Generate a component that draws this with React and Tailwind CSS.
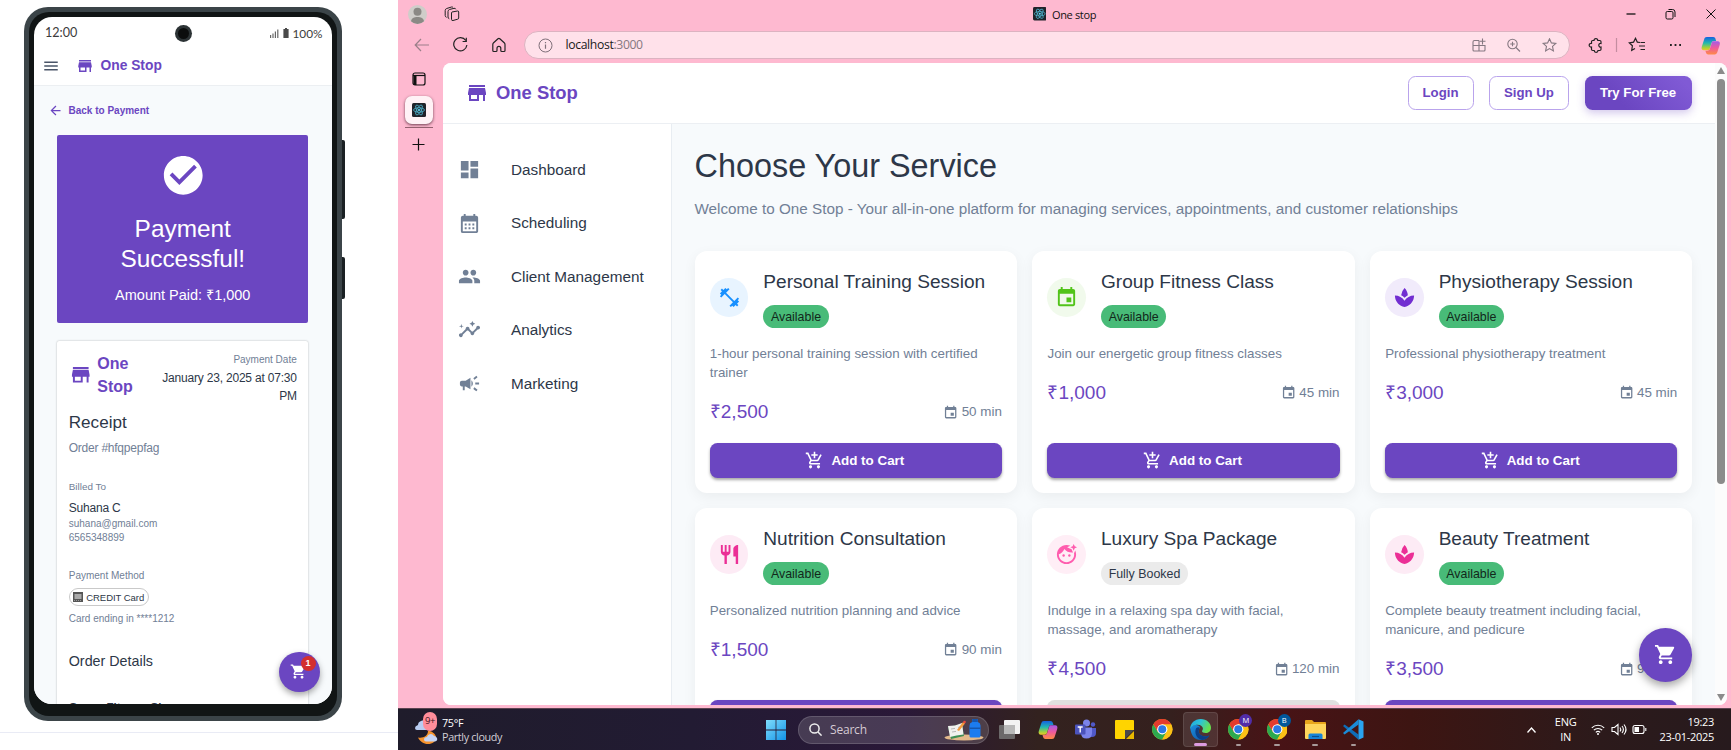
import React from "react";
import {
  MdStore, MdDashboard, MdCalendarMonth, MdPeople, MdInsights, MdCampaign, MdFitnessCenter,
  MdEvent, MdSpa, MdRestaurant, MdFaceRetouchingNatural, MdAddShoppingCart, MdShoppingCart,
  MdCheckCircle, MdMenu, MdArrowBack,
} from "react-icons/md";

/* ---------- phone ---------- */

function PhoneStatus() {
  return (
    <div className="relative flex h-[32px] shrink-0 items-center justify-between pt-px pr-[9px] pl-[11px] text-[#3c3c3c]">
      <span className="font-['Lato',sans-serif] text-[12.6px] leading-none">12:00</span>
      <div className="absolute top-[8px] left-[140.5px] flex size-[17px] items-center justify-center rounded-full bg-[#2c3335]">
        <div className="size-[11px] rounded-full bg-[#0b0d0d]" />
      </div>
      <div className="flex items-center">
        <svg className="h-[9px] w-[9px]" viewBox="0 0 9 9" fill="#666">
          <path d="M0 6h1.2v3H0zM2.4 4.4h1.2V9H2.4zM4.8 2.6H6V9H4.800zM7.200 .6h1.2V9H7.200z" />
        </svg>
        <svg className="ml-[4px] h-[10px] w-[6px]" viewBox="0 0 6 10" fill="#4a4a4a">
          <path d="M2 0h2v1h1.600v9H.4V1H2z" />
        </svg>
        <span className="ml-[4px] font-['Lato',sans-serif] text-[11.8px] leading-none">100%</span>
      </div>
    </div>
  );
}

function Receipt() {
  return (
    <div className="mt-[17.500px] h-[400px] w-[251px] shrink-0 rounded-[2px] bg-white px-[11.500px] pt-[11px] text-[#2d3748] shadow-[0_0_2px_rgba(0,0,0,0.3)]">
      <div className="flex h-[54px] justify-between">
        <div className="flex h-[47px] items-center text-[#6b46c1]">
          <MdStore className="size-[23.500px]" />
          <span className="ml-[5px] w-[40px] text-[16px] leading-[23.500px] font-bold">One Stop</span>
        </div>
        <div className="w-[142px] text-right">
          <div className="text-[10px] leading-4 text-[#718096]">Payment Date</div>
          <div className="mt-px text-[12px] leading-[18px] tracking-[-0.2px]">January 23, 2025 at 07:30 PM</div>
        </div>
      </div>
      <div className="mt-[9px] text-[17.100px] leading-4">Receipt</div>
      <div className="mt-[9px] text-[12px] leading-4 tracking-[-0.23px] text-[#718096]">Order #hfqpepfag</div>
      <div className="mt-[23px] text-[9.900px] leading-4 text-[#718096]">Billed To</div>
      <div className="mt-[5px] text-[12px] leading-4 tracking-[-0.2px]">Suhana C</div>
      <div className="mt-px text-[10px] leading-[14px] text-[#718096]">suhana@gmail.com</div>
      <div className="text-[10px] leading-[14px] text-[#718096]">6565348899</div>
      <div className="mt-[23px] text-[10px] leading-4 text-[#718096]">Payment Method</div>
      <div className="mt-[4.500px] flex h-[17.500px] w-[80.500px] items-center rounded-full border border-[#c9c9c9] pl-[3px]">
        <svg className="size-[10px]" viewBox="0 0 10 10">
          <rect width="10" height="10" fill="#555" />
          <rect x="1.500" y="2" width="7" height="5" fill="#a9a9a9" />
          <path d="M1 8.500h8" stroke="#999" strokeWidth="1" strokeDasharray="1 1" />
        </svg>
        <span className="ml-[3.500px] pt-px text-[9.500px] leading-none tracking-[-0.05px] whitespace-nowrap">CREDIT Card</span>
      </div>
      <div className="mt-[5px] text-[10px] leading-4 text-[#718096]">Card ending in ****1212</div>
      <div className="mt-[26px] text-[14.300px] leading-4">Order Details</div>
      <div className="mt-[30px] text-[11.500px] leading-4 font-bold">Group Fitness Class</div>
    </div>
  );
}

function Phone() {
  return (
    <div className="relative mt-[7px] ml-[24px] h-[714px] w-[317.500px]">
      <div className="absolute top-[133px] -right-[3px] h-[79px] w-[5px] rounded-[2px] bg-[#1a2023]" />
      <div className="absolute top-[250px] -right-[3px] h-[42px] w-[5px] rounded-[2px] bg-[#1a2023]" />
      <div className="relative h-full w-full rounded-[24px] bg-[#3b4448] p-[5px]">
        <div className="h-full w-full rounded-[20px] bg-[#111515] px-[5px] pt-[5px] pb-[12px]">
          <div className="relative flex h-full w-full flex-col overflow-hidden rounded-[18px] bg-white">
            <PhoneStatus />
            <div className="flex h-[37px] shrink-0 items-center border-b border-[#eceff2] pb-[3px] pl-[8px]">
              <MdMenu className="h-[18px] w-[18px] text-[#4a5568]" />
              <div className="ml-[16px] flex items-center text-[#6b46c1]">
                <MdStore className="size-[18px]" />
                <span className="ml-[6.500px] pt-px text-[13.800px] leading-none font-bold">One Stop</span>
              </div>
            </div>
            <div className="flex grow flex-col items-center bg-[#f7fafc]">
              <div className="flex w-full items-center pt-[16.500px] pl-[14px] text-[#6b46c1]">
                <MdArrowBack className="size-[15px]" />
                <span className="ml-[5.500px] text-[10px] leading-4 font-bold">Back to Payment</span>
              </div>
              <div className="mt-[16.500px] flex h-[188px] w-[251px] shrink-0 flex-col items-center rounded-[2px] bg-[#6b46c1] pt-[17px] text-white">
                <MdCheckCircle className="size-[46.500px]" />
                <div className="mt-[15px] w-[160px] text-center text-[24.400px] leading-[30px]">Payment Successful!</div>
                <div className="mt-[11px] text-[14.500px] leading-[20px]">Amount Paid: ₹1,000</div>
              </div>
              <Receipt />
            </div>
            <div className="absolute right-[12px] bottom-[12px] flex size-[40.500px] items-center justify-center rounded-full bg-[#6b46c1] text-white shadow-[0_3px_6px_rgba(0,0,0,0.35)]">
              <MdShoppingCart className="mr-px size-[17px]" />
              <span className="absolute top-[4.500px] right-[4px] flex size-[15px] items-center justify-center rounded-full bg-[#d32f2f] text-[9px] font-bold">1</span>
            </div>
          </div>
        </div>
      </div>
    </div>
  );
}

/* ---------- brand marks ---------- */

function ReactMark({ className }) {
  return (
    <svg className={className} viewBox="0 0 14 14">
      <rect width="14" height="14" rx="1.500" fill="#20232a" />
      <g fill="none" stroke="#4fb6d0" strokeWidth=".8">
        <ellipse cx="7" cy="7" rx="5.500" ry="2.200" />
        <ellipse cx="7" cy="7" rx="5.500" ry="2.200" transform="rotate(60 7 7)" />
        <ellipse cx="7" cy="7" rx="5.500" ry="2.200" transform="rotate(120 7 7)" />
      </g>
      <circle cx="7" cy="7" r="1.100" fill="#61dafb" />
    </svg>
  );
}

function Copilot({ className, id }) {
  return (
    <svg className={className} viewBox="0 0 20 20">
      <defs>
        <linearGradient id={id + "a"} x1="0" y1="0" x2="0" y2="1">
          <stop offset="0" stopColor="#1560e0" />
          <stop offset=".45" stopColor="#22b8b0" />
          <stop offset=".8" stopColor="#a5cf3a" />
          <stop offset="1" stopColor="#f0c52a" />
        </linearGradient>
        <linearGradient id={id + "b"} x1="0" y1="0" x2="0" y2="1">
          <stop offset="0" stopColor="#a35be8" />
          <stop offset=".5" stopColor="#ee5a9c" />
          <stop offset="1" stopColor="#ff8b45" />
        </linearGradient>
      </defs>
      <path fill={"url(#" + id + "a)"} d="M6 1h6.500c1.300 0 2 .7 2.400 2l.6 2h-2c-1.600 0-2.300.9-2.700 2.200L9 13c-.4 1.300-1 1.700-2.200 1.700H3C.8 14.700.2 13 .8 11L3.200 3.500C3.700 1.800 4.500 1 6 1z" />
      <path fill={"url(#" + id + "b)"} d="M14 19H7.500c-1.300 0-2-.7-2.400-2l-.6-2h2c1.600 0 2.300-.9 2.700-2.200L11 7c.4-1.300 1-1.700 2.200-1.700H17c2.200 0 2.800 1.700 2.200 3.700l-2.400 7.500C16.300 18.200 15.500 19 14 19z" />
    </svg>
  );
}

function Chrome({ className }) {
  return (
    <svg className={className} viewBox="0 0 20 20">
      <circle cx="10" cy="10" r="10" fill="#fbc116" />
      <path fill="#2da94f" d="M10 20A10 10 0 0 1 1.340 5L5.700 12.500 10 15l4.300-2.500z" />
      <path fill="#fbc116" d="M10 20 14.300 12.500 14 7 10 5h8.660A10 10 0 0 1 10 20z" />
      <path fill="#e33b2e" d="M1.340 5A10 10 0 0 1 18.660 5H10L5.700 12.500z" />
      <circle cx="10" cy="10" r="5" fill="#fff" />
      <circle cx="10" cy="10" r="3.900" fill="#2a78e4" />
    </svg>
  );
}

function Edge({ className }) {
  return (
    <svg className={className} viewBox="0 0 20 20">
      <defs>
        <linearGradient id="edgeTop" x1="0" y1="0" x2="1" y2=".4">
          <stop offset="0" stopColor="#1fa6e0" />
          <stop offset=".5" stopColor="#2cc3d8" />
          <stop offset="1" stopColor="#67e04e" />
        </linearGradient>
        <linearGradient id="edgeLow" x1="0" y1="0" x2="1" y2="1">
          <stop offset="0" stopColor="#1b8fe0" />
          <stop offset="1" stopColor="#0f4fa0" />
        </linearGradient>
      </defs>
      <path fill="url(#edgeLow)" d="M.2 8.500C1 14 3 20 10.500 20c4 0 6.500-2 7.900-4.300-4.400 2.300-10.200.3-10.100-4.200C8.300 9 10 8.500 9.500 7.500 7 4.500 1.500 5.500.2 8.500z" />
      <path fill="#0c3f86" d="M6 8.500c-2.300 4 .2 10.500 5.500 11.400 3.300-.1 5.600-2 6.900-4.200-4.400 2.300-10.200.3-10.100-4.200 0-1.600.8-2.500 1.200-3.200-1-.8-2.500-.7-3.500.2z" />
      <path fill="url(#edgeTop)" d="M0 9.500C.3 4 4.500 0 10.200 0 16 0 20 4 20 8.300c0 3.200-2.400 5-5 5-2.300 0-3.600-.8-3.600-1.600 0-.7.900-.9.900-2.600 0-2-2-3.700-5-3.700C3.500 5.400.8 7.500 0 9.500z" />
    </svg>
  );
}

/* ---------- browser ---------- */

function TitleBar() {
  return (
    <div className="flex h-[28px] shrink-0 items-center text-[#111]">
      <svg className="ml-[10px] size-[19px]" viewBox="0 0 19 19">
        <circle cx="9.500" cy="9.500" r="9.500" fill="#cfcdc9" />
        <circle cx="9.500" cy="6.800" r="4" fill="#8b8985" />
        <path d="M3 16.300c.5-3.300 3-4.300 6.500-4.300s6 1 6.500 4.300A9.500 9.500 0 0 1 9.500 19 9.500 9.500 0 0 1 3 16.300z" fill="#8b8985" />
      </svg>
      <svg className="ml-[17px] size-[16px]" viewBox="0 0 16 16" fill="none" stroke="#222" strokeWidth="1">
        <path d="m8 6 5.500-1q1.200-.2 1.200 1v6q0 1-1 1.200L9 14.500q-1.500.3-1.500-1.200V7q0-.8.5-1z" />
        <path d="M5.300 12.800Q4 12.500 4 11V5.500q0-1.500 1.500-2L10 2.300q1.500-.3 1.800 1M2.600 11.300Q1.200 11 1.200 9.500V4.500q0-1.500 1.500-2L7.500 1Q8.500.8 9 1.500" />
      </svg>
      <ReactMark className="ml-[572.500px] size-[13.500px]" />
      <span className="ml-[6px] w-[46px] font-['Open_Sans',sans-serif] text-[11px] leading-none tracking-[-0.35px] whitespace-nowrap">One stop</span>
      <svg className="ml-[528px] h-[12px] w-[90px]" viewBox="0 0 90 12" fill="none" stroke="#111" strokeWidth="1">
        <path d="M.5 6h9" strokeWidth="1.300" />
        <rect x="40" y="3.500" width="7" height="7.500" rx="1.300" />
        <path d="M42.500 1.500h4q2.500 0 2.500 2.500v5" />
        <path d="m80.500 1.500 9 9m0-9-9 9" />
      </svg>
    </div>
  );
}

function ToolBar() {
  return (
    <div className="flex h-[34.500px] shrink-0 items-center">
      <svg className="ml-[16px] h-[16px] w-[92px]" viewBox="0 0 92 16" fill="none" stroke="#222" strokeWidth="1.200">
        <path d="M15 8H1.500M7 2 1.200 8 7 14" stroke="#9b7f89" />
        <path d="M51.500 3.500A6.600 6.600 0 1 0 52.600 8M52 .8v3.700h-3.700" transform="translate(.3)" />
        <path d="M78.800 7.400q0-1 .8-1.700l4.400-4q.9-.8 1.800 0l4.400 4q.8.700.8 1.700v6.100q0 1-1 1h-2.200q-1 0-1-1v-2.300q0-1.900-1.900-1.900T83 11.200v2.300q0 1-1 1h-2.200q-1 0-1-1z" />
      </svg>
      <div className="ml-[17.500px] flex h-[28px] w-[1046px] items-center rounded-full border border-[#dcb3c1] bg-[#ffe1ea] pl-[13px]">
        <svg className="size-[15px]" viewBox="0 0 15 15" fill="none" stroke="#80707a" strokeWidth="1">
          <circle cx="7.500" cy="7.500" r="6.500" />
          <path d="M7.500 6.500v4.300M7.500 4v1.300" strokeWidth="1.200" />
        </svg>
        <span className="ml-[13px] w-[600px] font-['Open_Sans',sans-serif] text-[12.200px] leading-none tracking-[-0.35px] text-[#1a1a1a]">
          localhost<span className="text-[#857881]">:3000</span>
        </span>
        <svg className="ml-[306px] h-[14px] w-[86px]" viewBox="0 0 86 14" fill="none" stroke="#857881" strokeWidth="1.100">
          <path d="M7 2.500H2.500q-1.500 0-1.500 1.500V12q0 1 1 1H12q1 0 1-1V7.500H1M7 2.500V13M10.500 .5v6M7.800 3.200h5.700" />
          <circle cx="40.500" cy="6" r="4.700" />
          <path d="m44 9.500 4 4M38.200 6h4.600M40.500 3.700v4.600" />
          <path d="m77.500.8 1.900 4.100 4.400.5-3.300 3 .9 4.500-3.900-2.300-3.900 2.300.9-4.500-3.300-3 4.400-.5z" />
        </svg>
      </div>
      <svg className="ml-[18px] h-[16px] w-[96px]" viewBox="0 0 96 16" fill="none" stroke="#222" strokeWidth="1.200">
        <path d="M6 3.500a1.900 1.900 0 1 1 3.800 0h2q1.200 0 1.200 1.200V6.500a1.800 1.800 0 1 0 0 3.500v2.300q0 1.200-1.200 1.200H10a1.900 1.900 0 0 1-3.800 0H4.700q-1.200 0-1.200-1.200V10a1.900 1.900 0 1 1 0-3.700V4.700q0-1.200 1.200-1.200z" />
        <path d="M28.500 1v14" stroke="#c48da0" />
        <path d="m52 5.500-2.700-.4L47.500 1.300l-1.900 3.800-4.300.7 3.100 3-.7 4.500 3.300-1.800M52.500 5.500h4.500M51 9h6M52.500 12.500h4.500" />
        <path d="M82 8h1.800M86.600 8h1.800M91.200 8H93" strokeWidth="2" />
      </svg>
      <Copilot id="tb" className="ml-[17.500px] size-[19.500px]" />
    </div>
  );
}

function Rail() {
  return (
    <div className="flex w-[44.500px] shrink-0 flex-col items-center pr-[3px]">
      <svg className="mt-[9px] size-[14px]" viewBox="0 0 14 14" fill="none" stroke="#111" strokeWidth="1.200">
        <rect x="1" y="1" width="12" height="12" rx="2" />
        <path d="M1 3.500h12" />
        <path d="M3 3.500V13" strokeWidth="3" />
      </svg>
      <div className="mt-[10px] flex size-[28.500px] items-center justify-center rounded-[7px] bg-[#fff2f6] shadow-[0_1px_3px_rgba(60,20,35,0.75)]">
        <ReactMark className="size-[14px]" />
      </div>
      <div className="mt-[2.500px] h-px w-[28px] bg-[#93606f]" />
      <svg className="mt-[10.500px] size-[13px]" viewBox="0 0 13 13" stroke="#111" strokeWidth="1.200">
        <path d="M6.500.5v12M.5 6.500h12" />
      </svg>
    </div>
  );
}

const NAV = [
  [MdDashboard, "Dashboard"],
  [MdCalendarMonth, "Scheduling"],
  [MdPeople, "Client Management"],
  [MdInsights, "Analytics"],
  [MdCampaign, "Marketing"],
];

const SERVICES = [
  { name: "Personal Training Session", icon: MdFitnessCenter, tint: "bg-[#e8f4ff] text-[#1890ff]", desc: "1-hour personal training session with certified trainer", price: "₹2,500", time: "50 min" },
  { name: "Group Fitness Class", icon: MdEvent, tint: "bg-[#f1faec] text-[#52c41a]", desc: "Join our energetic group fitness classes", price: "₹1,000", time: "45 min" },
  { name: "Physiotherapy Session", icon: MdSpa, tint: "bg-[#f1ebfb] text-[#722ed1]", desc: "Professional physiotherapy treatment", price: "₹3,000", time: "45 min" },
  { name: "Nutrition Consultation", icon: MdRestaurant, tint: "bg-[#fdebf5] text-[#eb2f96]", desc: "Personalized nutrition planning and advice", price: "₹1,500", time: "90 min" },
  { name: "Luxury Spa Package", icon: MdFaceRetouchingNatural, tint: "bg-[#ffeef6] text-[#ff5cae]", desc: "Indulge in a relaxing spa day with facial, massage, and aromatherapy", price: "₹4,500", time: "120 min", full: true },
  { name: "Beauty Treatment", icon: MdSpa, tint: "bg-[#fdebf5] text-[#eb2f96]", desc: "Complete beauty treatment including facial, manicure, and pedicure", price: "₹3,500", time: "90 min" },
];

function ServiceCard({ s }) {
  const Icon = s.icon;
  return (
    <div className="flex h-[242px] flex-col rounded-[12px] bg-white px-[15.300px] pt-[15.700px] pb-[15px] shadow-[0_4px_14px_rgba(0,0,0,0.055)]">
      <div className="flex items-center">
        <div className={"flex size-[38.500px] shrink-0 items-center justify-center rounded-full " + s.tint}>
          <Icon className="size-[23px]" />
        </div>
        <div className="ml-[15px]">
          <div className="text-[19.100px] leading-[30px] whitespace-nowrap text-[#2d3748]">{s.name}</div>
          <div className={"mt-[8.800px] flex h-[23px] w-fit items-center rounded-full px-[7.700px] text-[12.400px] " + (s.full ? "bg-[#ebebeb] text-[#2d3748]" : "bg-[#48bb78] text-[#12281b]")}>
            {s.full ? "Fully Booked" : "Available"}
          </div>
        </div>
      </div>
      <div className="mt-[15.200px] text-[13.350px] leading-[19.300px] text-[#718096]">{s.desc}</div>
      <div className="mt-[15px] flex items-center justify-between">
        <span className="text-[19px] leading-[30px] text-[#6b46c1]">{s.price}</span>
        <span className="flex items-center text-[13.400px] text-[#718096]">
          <MdEvent className="mr-[3px] size-[15.300px]" />
          {s.time}
        </span>
      </div>
      <div className={"mt-auto flex h-[34.800px] shrink-0 items-center justify-center rounded-[7.500px] pr-[2px] text-[13.400px] font-bold " + (s.full ? "bg-[#e0e0e0] text-[#a6a6a6]" : "bg-[#6b46c1] text-white shadow-[0_2px_3px_rgba(0,0,0,0.35)]")}>
        <MdAddShoppingCart className="mr-[7px] size-[19px]" />
        Add to Cart
      </div>
    </div>
  );
}

function SitePage() {
  return (
    <div className="relative flex h-[642.500px] w-[1284.500px] shrink-0 overflow-hidden rounded-[8px] bg-[#f7fafc]">
      <div className="flex w-[1272.500px] shrink-0 flex-col">
        <div className="flex h-[61.500px] shrink-0 items-center border-b border-[#eceff3] bg-white pr-[23.500px] pl-[22.500px]">
          <MdStore className="size-[24px] text-[#6b46c1]" />
          <span className="ml-[7px] text-[18.400px] leading-none font-bold text-[#6b46c1]">One Stop</span>
          <div className="ml-auto flex gap-[15.500px] text-[13.200px] font-bold text-[#6b46c1]">
            <div className="flex h-[34.500px] w-[66px] items-center justify-center rounded-[7.500px] border border-[#b9a3ec]">Login</div>
            <div className="flex h-[34.500px] w-[80px] items-center justify-center rounded-[7.500px] border border-[#b9a3ec]">Sign Up</div>
            <div className="flex h-[34.500px] w-[107px] items-center justify-center rounded-[7.500px] bg-linear-45 from-[#6b46c1] from-30% to-[#805ad5] to-90% text-white shadow-[0_3px_8px_rgba(107,70,193,0.3)]">Try For Free</div>
          </div>
        </div>
        <div className="flex min-h-0 grow">
          <div className="flex w-[229px] shrink-0 flex-col border-r border-[#e8edf2] bg-white pt-[19px] pl-[15px]">
            {NAV.map(([Icon, label]) => (
              <div key={label} className="flex h-[53.400px] items-center">
                <Icon className="size-[23px] text-[#718096]" />
                <span className="ml-[30.500px] text-[15.300px] leading-none whitespace-nowrap text-[#2d3748]">{label}</span>
              </div>
            ))}
          </div>
          <div className="min-h-0 grow overflow-hidden pt-[21.600px] pl-[23px]">
            <div className="text-[32.400px] leading-[40px] text-[#2d3748]">Choose Your Service</div>
            <div className="mt-[11.500px] text-[15.250px] leading-[23px] text-[#718096]">
              Welcome to One Stop - Your all-in-one platform for managing services, appointments, and customer relationships
            </div>
            <div className="mt-[30.900px] grid w-[998px] grid-cols-3 gap-[15px]">
              {SERVICES.map((s) => <ServiceCard key={s.name} s={s} />)}
            </div>
          </div>
        </div>
      </div>
      <div className="flex w-[12px] flex-col items-center bg-[#fcfcfc] py-[4px]">
        <svg className="h-[7px] w-[8px]" viewBox="0 0 8 7" fill="#8b8b8b"><path d="m4 0 4 7H0z" /></svg>
        <div className="mt-[5px] h-[405px] w-[7.500px] rounded-full bg-[#8b8b8b]" />
        <svg className="mt-auto h-[7px] w-[8px]" viewBox="0 0 8 7" fill="#8b8b8b"><path d="m4 7 4-7H0z" /></svg>
      </div>
      <div className="absolute right-[35px] bottom-[23.500px] flex size-[53.500px] items-center justify-center rounded-full bg-[#6b46c1] text-white shadow-[0_4px_9px_rgba(0,0,0,0.35)]">
        <MdShoppingCart className="size-[23px]" />
      </div>
    </div>
  );
}

/* ---------- taskbar ---------- */

function Slot({ children, active, dot, badge, badgeTone }) {
  return (
    <div className={"relative flex h-[35px] w-[34.500px] shrink-0 items-center justify-center rounded-[4px] " + (active ? "border border-white/10 bg-white/10" : "")}>
      {children}
      {badge && (
        <span className={"absolute top-[2px] left-[18px] flex size-[13px] items-center justify-center rounded-full text-[7.500px] leading-none text-white " + badgeTone}>{badge}</span>
      )}
      {active && <span className="absolute bottom-0 h-[3px] w-[13.500px] rounded-full bg-[#dc9be0]" />}
      {dot && <span className="absolute bottom-[1px] h-[2.500px] w-[5.500px] rounded-full bg-[#a89a9a]" />}
    </div>
  );
}

function Taskbar() {
  return (
    <div className="flex h-[42px] shrink-0 items-center border-t border-[#5b4450] bg-[linear-gradient(90deg,#1f1c2b_0%,#221b33_22%,#2a1838_38%,#33221f_48%,#35201e_58%,#481316_66%,#3d1512_76%,#2c1a1b_90%,#271a1d_100%)] font-['Open_Sans',sans-serif] text-white">
      <div className="relative ml-[17px] h-[34px] w-[25px]">
        <svg className="h-full w-full" viewBox="0 0 25 34">
          <path d="M3 24.500c5 1 10-1.500 10-6.500 1-1 8 2 8 6.500 0 4-3.500 6.500-8 6.500-4.500 0-8-2.500-10-6.500z" fill="#f5932d" />
          <path d="M2 17h12q3-1 2-4-1-3-4-3-2-4-6-2-3 1-3 4-3 1-3 3 0 2 2 2z" fill="#b9cdf2" />
          <path d="M11 28.500h9q3-1 2-3.500-1-2-3-2-2-3-5-1.500-2 1-2 2.500-3 0-3 2.500 0 2 2 2z" fill="#c6d5f5" />
        </svg>
        <span className="absolute -top-[1px] left-[8px] flex h-[19px] w-[14px] items-center justify-center rounded-full bg-[#ff8d9a] text-[9.500px] leading-none tracking-tighter text-[#40161d]">9+</span>
      </div>
      <div className="ml-[2px] w-[100px] text-[10.800px] leading-[14px] tracking-[-0.35px]">
        <div>75°F</div>
        <div className="text-[#d3cfd6]">Partly cloudy</div>
      </div>
      <svg className="ml-[224px] size-[20px]" viewBox="0 0 20 20">
        <defs>
          <linearGradient id="win" x1="0" y1="0" x2="1" y2="1"><stop offset="0" stopColor="#7fdcfb" /><stop offset="1" stopColor="#1293e8" /></linearGradient>
        </defs>
        <path fill="url(#win)" d="M0 0h9.600v9.600H0zM10.400 0H20v9.600h-9.600zM0 10.400h9.600V20H0zM10.400 10.400H20V20h-9.600z" />
      </svg>
      <div className="ml-[12px] flex h-[28px] w-[191px] items-center rounded-full border border-white/15 bg-white/15 pl-[10px]">
        <svg className="size-[13px]" viewBox="0 0 13 13" fill="none" stroke="#eee" strokeWidth="1.500"><circle cx="5.500" cy="5.500" r="4.600" /><path d="m9 9 3.600 3.600" /></svg>
        <span className="ml-[8px] w-[38px] text-[12px] tracking-[-0.2px] text-[#d5cad3]">Search</span>
        <svg className="ml-[76px] h-[22px] w-[40px]" viewBox="0 0 40 22">
          <ellipse cx="20" cy="18.500" rx="19.500" ry="3" fill="#e3b98b" />
          <path d="m4 8 14-3 2 12-13 3z" fill="#3f8f55" />
          <path d="m4 7 7-.5L18 4l1.500 11.500-7 1L6 18z" fill="#f1f1ee" />
          <path d="m7 10 4-.6M8 13l4-.6M14 8.500l2.500-.8" stroke="#aaa" strokeWidth=".8" />
          <path d="m13 11 6-8 2 1.500-6 7.500z" fill="#f29a3c" /><circle cx="20.500" cy="3" r="1.300" fill="#e8483c" />
          <path d="M29 0h4q.8 0 .8 1v2q2.700.8 2.700 3.500V17q0 1.500-1.500 1.500h-8q-1.500 0-1.500-1.500V6.500q0-2.700 2.700-3.500V1q0-1 .8-1z" fill="#1c7cf0" />
          <path d="M29 0h4q.8 0 .8 1v2h-5.600V1q0-1 .8-1zM25.500 8.500h11v1.500h-11z" fill="#1556ae" />
        </svg>
      </div>
      <svg className="ml-[10px] size-[21px]" viewBox="0 0 21 21">
        <rect x="5" y="1" width="16" height="14" rx="1" fill="#f3f3f3" />
        <rect x="0" y="6" width="16" height="14" rx="1" fill="#777" fillOpacity=".85" />
        <rect x="5" y="6" width="11" height="9" fill="#b9b9b9" />
      </svg>
      <div className="ml-[10.500px] flex gap-[3.700px]">
        <Slot><Copilot id="tk" className="size-[20px]" /></Slot>
        <Slot>
          <svg className="size-[21px]" viewBox="0 0 21 21">
            <circle cx="11.500" cy="4" r="3.500" fill="#7b83eb" /><circle cx="18" cy="5.500" r="2.200" fill="#5059c9" />
            <path d="M14 9h7v5q0 4-4 4h-2z" fill="#5059c9" /><path d="M6 8.500h11V14q0 5.500-5.500 5.500T6 14z" fill="#7b83eb" />
            <rect x="0" y="5.500" width="10.500" height="10" rx="1" fill="#4b53bc" />
            <path d="M2.700 8h5M5.200 8v5.500" stroke="#fff" strokeWidth="1.400" />
          </svg>
        </Slot>
        <Slot>
          <svg className="size-[19px]" viewBox="0 0 19 19">
            <path d="M1 0h17q1 0 1 1v9h-9v9H1q-1 0-1-1V1q0-1 1-1z" fill="#ffd400" /><path d="M10 10h9l-9 9z" fill="#4a4a4a" /><path d="M19 11v8h-8z" fill="#e8b800" />
          </svg>
        </Slot>
        <Slot><Chrome className="size-[20.500px]" /></Slot>
        <Slot active><Edge className="size-[21px]" /></Slot>
        <Slot dot badge="M" badgeTone="bg-[#512da8]"><Chrome className="size-[20.500px]" /></Slot>
        <Slot dot badge="B" badgeTone="bg-[#01579b]"><Chrome className="size-[20.500px]" /></Slot>
        <Slot dot>
          <svg className="h-[19px] w-[21px]" viewBox="0 0 21 19">
            <path d="M0 1q0-1 1-1h6l2 2h11q1 0 1 1v15H0z" fill="#e8a61c" /><path d="M0 4h21v14q0 1-1 1H1q-1 0-1-1z" fill="#ffd65c" />
            <path d="M3.500 19v-4q0-1.500 1.500-1.500h11q1.500 0 1.500 1.500v4z" fill="#1784d8" /><path d="M7 16.500h7" stroke="#0c4f8d" strokeWidth="1.200" />
          </svg>
        </Slot>
        <Slot dot>
          <svg className="size-[21px]" viewBox="0 0 21 21">
            <path d="M0 7l1.600-1.500L15.500 15.500v5.200L0 7z" fill="#0e6db8" />
            <path d="M0 14l1.600 1.500L15.500 5.500V.3L0 14z" fill="#1a8bd8" />
            <path d="M15.500.3 20.500 2.500v16l-5 2.200z" fill="#2aa4f0" />
          </svg>
        </Slot>
      </div>
      <div className="ml-auto flex items-center pr-[17px] text-[11px] tracking-[-0.3px]">
        <svg className="h-[6px] w-[9px]" viewBox="0 0 9 6" fill="none" stroke="#fff" strokeWidth="1.300"><path d="m.5 5.500 4-4.500 4 4.500" /></svg>
        <div className="ml-[19px] w-[22px] text-center leading-[14.500px]"><div>ENG</div><div>IN</div></div>
        <svg className="ml-[14px] h-[13px] w-[56px]" viewBox="0 0 56 13" fill="none" stroke="#fff" strokeWidth="1.100">
          <path d="M.8 4.800a9 9 0 0 1 12.400 0M2.800 7.200a6 6 0 0 1 8.400 0M4.800 9.400a3.200 3.200 0 0 1 4.400 0" />
          <circle cx="7" cy="11" r="1" fill="#fff" stroke="none" />
          <path d="M21 4.500h2.500L27 1.500v10l-3.500-3H21zM29 4.500q1.500 2 0 4M31 3q2.800 3.500 0 7M33 1.500q4 5 0 10" />
          <rect x="42" y="2.500" width="11" height="8" rx="2" /><rect x="43.500" y="4" width="4.500" height="5" fill="#fff" stroke="none" /><path d="M54.800 5v3" />
        </svg>
        <div className="ml-[13px] text-right leading-[14.500px]"><div>19:23</div><div>23-01-2025</div></div>
      </div>
    </div>
  );
}

export default function App() {
  return (
    <div className="flex h-[750px] w-[1731px] overflow-hidden bg-white font-['Liberation_Sans',sans-serif]">
      <div className="flex w-[398px] shrink-0 flex-col">
        <Phone />
        <div className="mt-[11px] h-px bg-[#e9ebf5]" />
      </div>
      <div className="flex w-[1333px] shrink-0 flex-col bg-[#feb9d0]">
        <TitleBar />
        <ToolBar />
        <div className="flex h-[645.500px] shrink-0">
          <Rail />
          <SitePage />
        </div>
        <Taskbar />
      </div>
    </div>
  );
}
